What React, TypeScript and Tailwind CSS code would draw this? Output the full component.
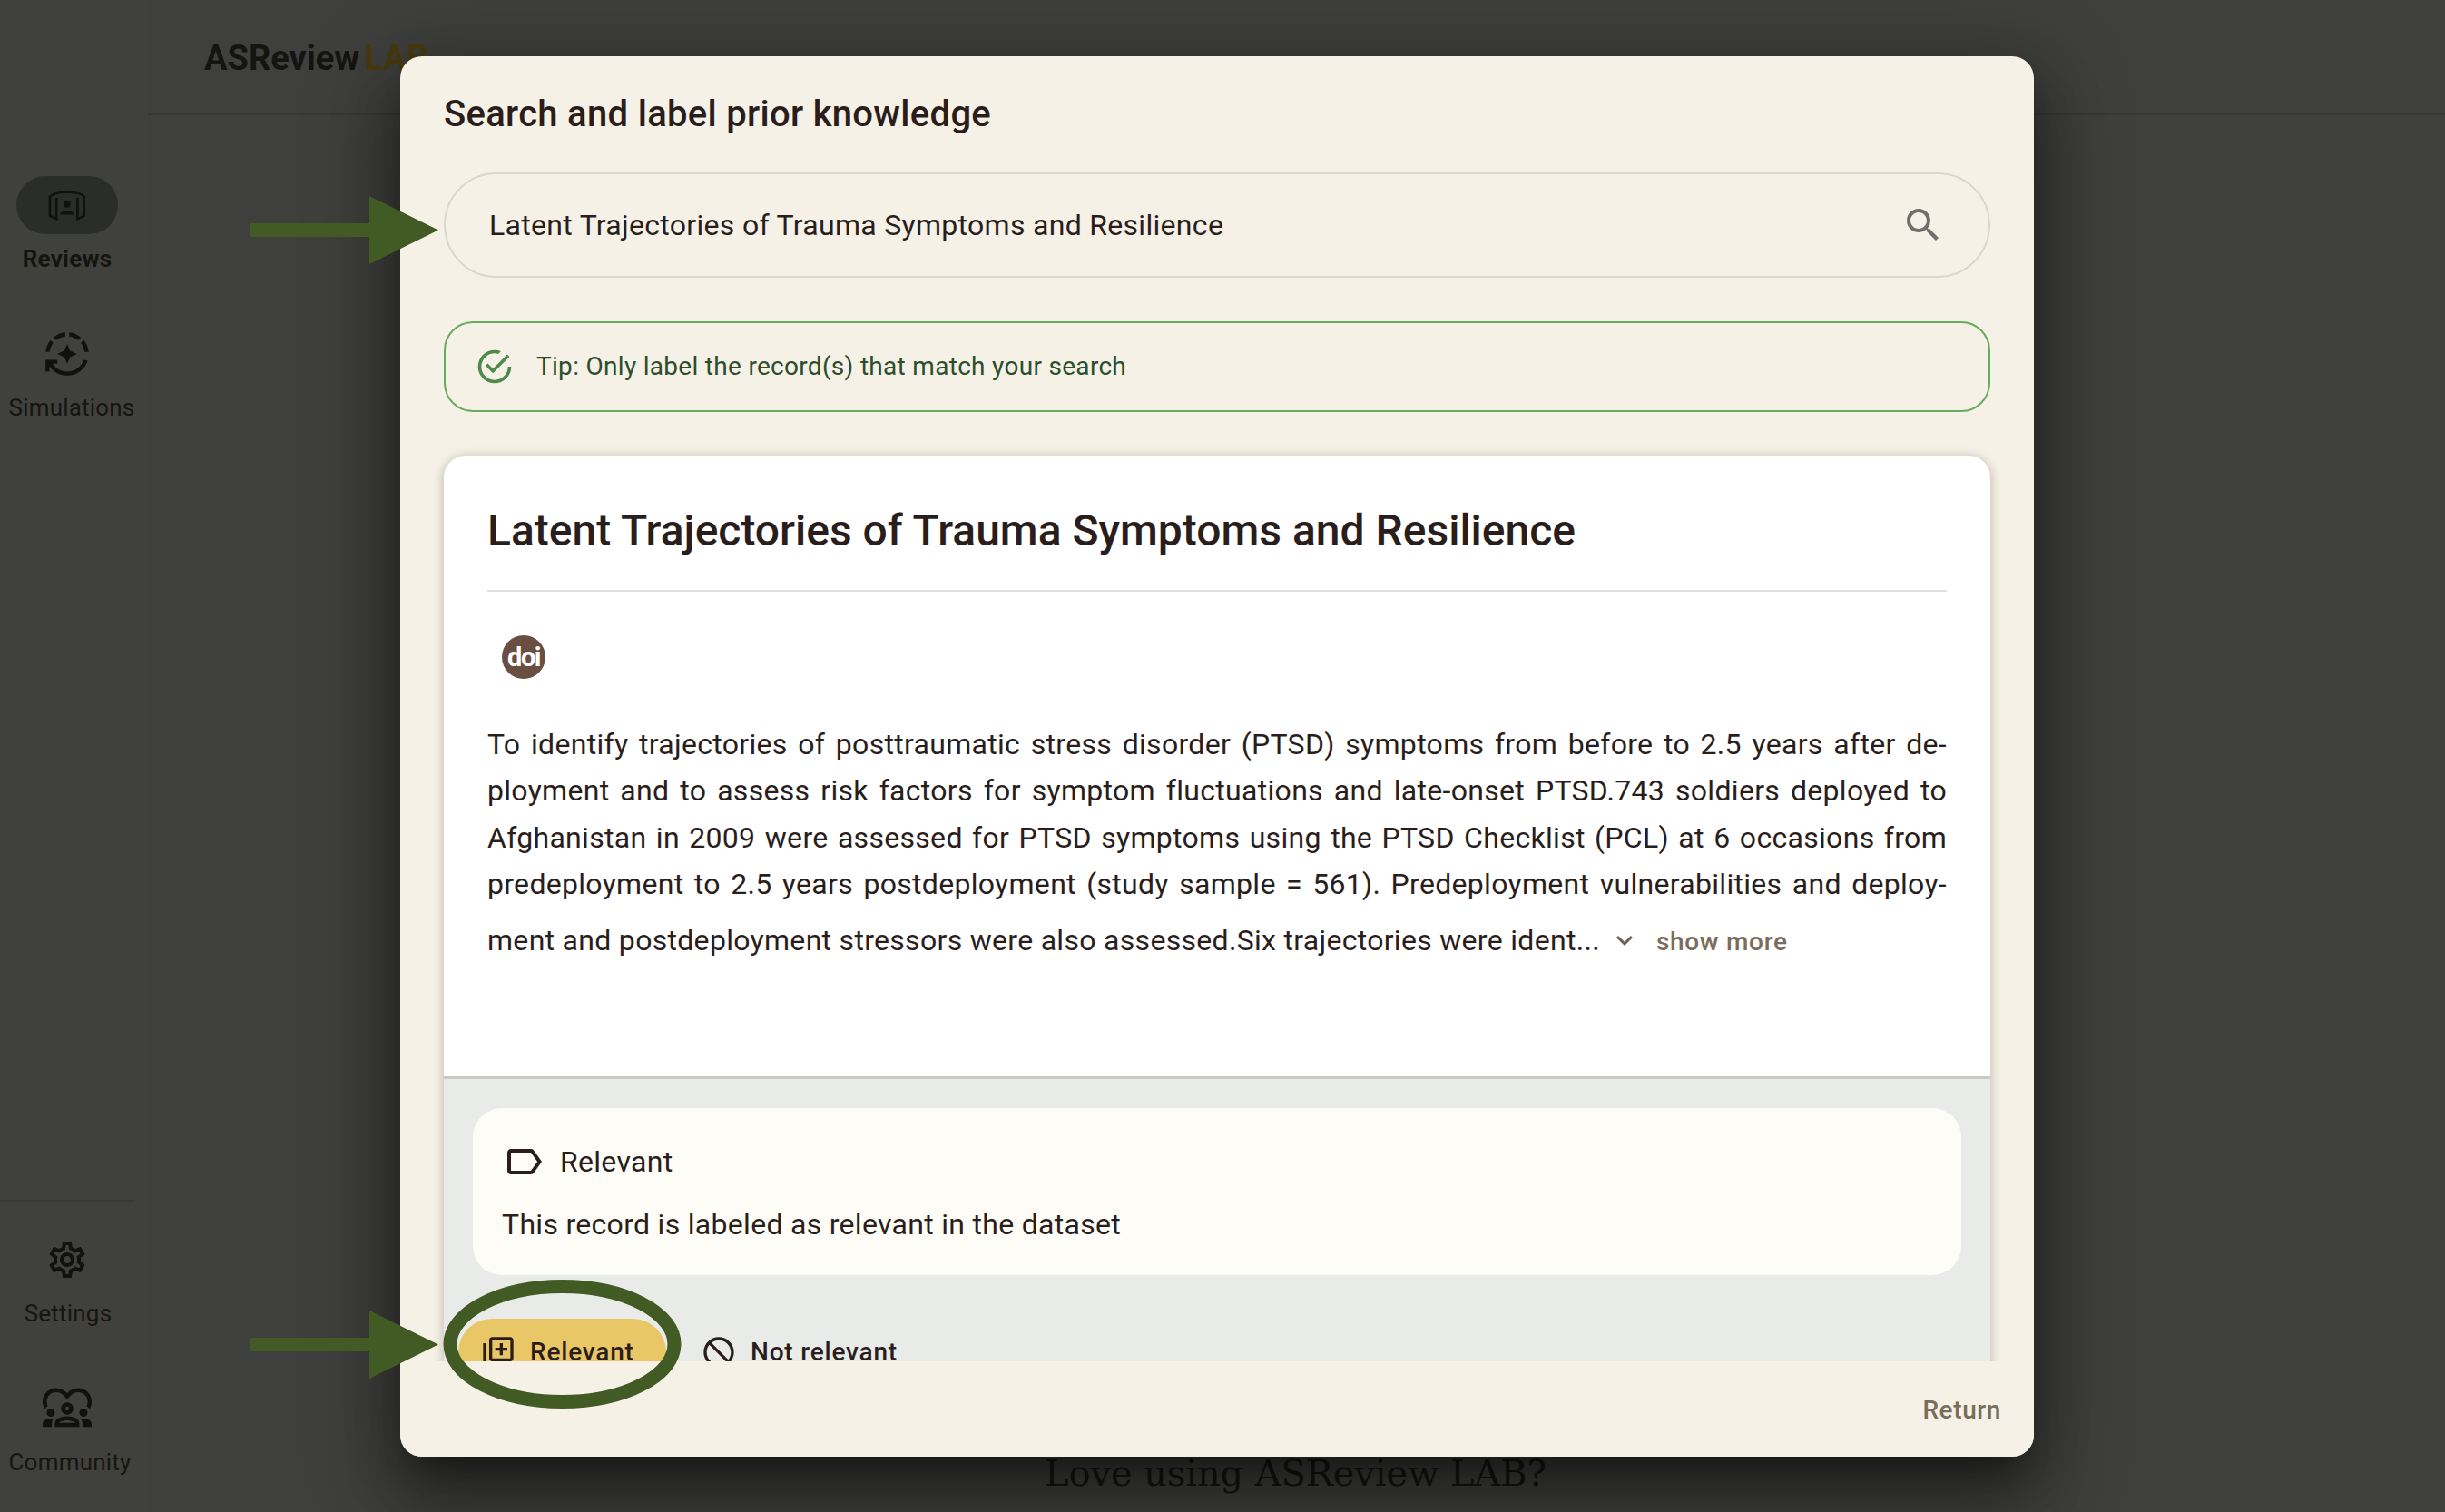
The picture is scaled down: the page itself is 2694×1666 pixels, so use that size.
import { MdAutoMode, MdExpandMore, MdOutlineDiversity1, MdOutlineLabel, MdOutlineLibraryAdd, MdOutlineSettings, MdSearch } from "react-icons/md";

const abstractLines = [
  "To identify trajectories of posttraumatic stress disorder (PTSD) symptoms from before to 2.5 years after de-",
  "ployment and to assess risk factors for symptom fluctuations and late-onset PTSD.743 soldiers deployed to",
  "Afghanistan in 2009 were assessed for PTSD symptoms using the PTSD Checklist (PCL) at 6 occasions from",
  "predeployment to 2.5 years postdeployment (study sample = 561). Predeployment vulnerabilities and deploy-",
];

function ReviewsIcon() {
  return (
    <svg viewBox="40 25 130 105" className="h-[35px] w-[43px]" fill="none" stroke="#11120f" strokeWidth="8">
      <path d="M44 50C60 27 148 27 162 50" />
      <path d="M46 46V112L68 122V52M160 46V112L138 122V52" />
      <circle cx="103" cy="72" r="12" fill="#11120f" stroke="none" />
      <path d="M80 108C80 90 126 90 126 108Z" fill="#11120f" stroke="none" />
    </svg>
  );
}

function NavItem({ label, icon, active, dx }: { label: string; icon: React.ReactNode; active?: boolean; dx: string }) {
  return (
    <div className="flex flex-col items-start">
      <div className={`ml-[18px] flex h-[64px] w-[112px] items-center justify-center rounded-[32px] ${active ? "bg-[#2b2d28]" : ""}`}>
        {icon}
      </div>
      <div className={`mt-[9px] w-[150px] text-center text-[26px] leading-[36px] tracking-[0.2px] ${dx} ${active ? "font-bold text-[#141510]" : "text-[#151612]"}`}>
        {label}
      </div>
    </div>
  );
}

function Arrow({ top }: { top: string }) {
  return (
    <svg viewBox="0 0 208 75" className={`absolute left-[275px] h-[75px] w-[208px] ${top}`}>
      <path d="M0 30H132V0L208 37.500L132 75V45H0Z" fill="#425a24" />
    </svg>
  );
}

export default function App() {
  return (
    <div className="relative flex h-[1666px] w-[2694px] overflow-hidden bg-[#3f3f3d] font-['Roboto',sans-serif]">
      {/* page behind the dialog */}
      <aside className="flex w-[163px] shrink-0 flex-col bg-[#40403c] pt-[194px]">
        <NavItem label="Reviews" active dx="-ml-[1px]" icon={<ReviewsIcon />} />
        <div className="mt-[55px]">
          <NavItem label="Simulations" dx="ml-[4px]" icon={<MdAutoMode size={52} color="#11120f" />} />
        </div>
        <div className="mt-auto mb-[2px] w-[146px] border-t-2 border-[#383835]" />
        <div className="pt-[30px]">
          <NavItem label="Settings" dx="ml-[0px]" icon={<MdOutlineSettings size={48} color="#11120f" />} />
        </div>
        <div className="mt-[55px] pb-[37px]">
          <NavItem label="Community" dx="ml-[2px]" icon={<MdOutlineDiversity1 size={54} color="#11120f" />} />
        </div>
      </aside>
      <main className="flex flex-1 flex-col">
        <header className="flex h-[127px] items-center border-b-2 border-[#383836] pt-[3px] pl-[62px] text-[38px] leading-none font-bold">
          <span className="text-[#141510]">ASReview</span>
          <span className="ml-[5px] text-[#4a3b0d]">LAB</span>
        </header>
        <div className="mt-auto pb-[18px] pl-[988px] font-['DejaVu_Serif',serif] text-[40px] leading-[50px] tracking-[-0.1px] text-[#161614]">
          Love using ASReview LAB?
        </div>
      </main>

      {/* dialog */}
      <section className="absolute top-[62px] left-[441px] flex h-[1543px] w-[1800px] flex-col rounded-[24px] bg-[#f5f1e7] tracking-[0.3px] text-[#2a1e1c] shadow-[0_22px_30px_-14px_rgba(0,0,0,0.35),0_48px_76px_6px_rgba(0,0,0,0.3),0_18px_92px_16px_rgba(0,0,0,0.25)]">
        <h2 className="px-[48px] pt-[47px] pb-[47px] text-[40px] leading-[34px] font-medium">Search and label prior knowledge</h2>
        <div className="flex flex-1 flex-col overflow-hidden px-[48px]">
          <div className="flex h-[116px] shrink-0 items-center justify-between rounded-full border-2 border-[#d9d7ce] pr-[48px] pl-[48px] text-[32px]">
            <span>Latent Trajectories of Trauma Symptoms and Resilience</span>
            <MdSearch size={48} color="#6f6e68" />
          </div>
          <div className="mt-[48px] flex h-[100px] shrink-0 items-center rounded-[32px] border-2 border-[#67ab5f] pl-[32px] text-[28px] text-[#2d4d2c]">
            <svg viewBox="0 0 24 24" className="h-[44px] w-[44px]" fill="#4f8a4b">
              <path d="M20,12A8,8 0 0,1 12,20A8,8 0 0,1 4,12A8,8 0 0,1 12,4C12.76,4 13.5,4.11 14.2,4.31L15.77,2.74C14.61,2.26 13.34,2 12,2A10,10 0 0,0 2,12A10,10 0 0,0 12,22A10,10 0 0,0 22,12M7.91,10.08L6.5,11.5L11,16L21,6L19.59,4.58L11,13.17L7.91,10.08Z" />
            </svg>
            <span className="ml-[24px]">Tip: Only label the record(s) that match your search</span>
          </div>
          <article className="mt-[48px] flex h-[1100px] shrink-0 flex-col rounded-t-[24px] bg-white shadow-[0_2px_8px_3px_rgba(80,70,40,0.22)]">
            <div className="h-[684px] shrink-0 px-[48px]">
              <h3 className="border-b-2 border-[#e0e0de] pt-[52px] pb-[34px] text-[48px] leading-[62px] font-medium tracking-normal">
                Latent Trajectories of Trauma Symptoms and Resilience
              </h3>
              <div className="mt-[48px] ml-[16px] flex h-[48px] w-[48px] items-center justify-center rounded-full bg-[#6b4e42] text-[29px] leading-none font-bold tracking-[-1.5px] text-white">
                doi
              </div>
              <div className="mt-[47px] text-[32px] leading-[51.400px]">
                {abstractLines.map((line) => (
                  <p key={line} className="[text-align-last:justify]">{line}</p>
                ))}
                <p className="mt-[9px] flex items-center">
                  <span>ment and postdeployment stressors were also assessed.Six trajectories were ident...</span>
                  <MdExpandMore size={36} color="#6f6250" className="ml-[9px]" />
                  <span className="mt-[2px] ml-[17px] text-[28px] font-medium tracking-[0.7px] text-[#7a6d5b]">show more</span>
                </p>
              </div>
            </div>
            <div className="flex-1 border-t-[3px] border-[#c9c9c6] bg-[#e9ebe8] px-[32px] pt-[32px]">
              <div className="h-[184px] rounded-[32px] bg-[#fdfcf6] px-[32px] pt-[35px]">
                <div className="flex items-center text-[32px] leading-[48px]">
                  <MdOutlineLabel size={48} />
                  <span className="ml-[16px]">Relevant</span>
                </div>
                <p className="mt-[21px] text-[32px] leading-[48px]">This record is labeled as relevant in the dataset</p>
              </div>
              <div className="mt-[48px] flex items-start text-[28px] font-medium tracking-[0.8px]">
                <div className="-ml-[16px] flex h-[74px] w-[229px] items-center rounded-[38px] bg-[#e9c766] pl-[24px]">
                  <MdOutlineLibraryAdd size={40} />
                  <span className="ml-[15px]">Relevant</span>
                </div>
                <div className="ml-[38px] flex h-[74px] items-center">
                  <svg viewBox="0 0 24 24" className="h-[40px] w-[40px]" fill="currentColor">
                    <path d="M12 2C6.47 2 2 6.47 2 12s4.47 10 10 10 10-4.47 10-10S17.53 2 12 2zm0 18c-4.41 0-8-3.59-8-8 0-1.85.63-3.55 1.69-4.9L16.9 18.31C15.55 19.37 13.85 20 12 20zm6.31-3.1L7.1 5.69C8.45 4.63 10.15 4 12 4c4.41 0 8 3.59 8 8 0 1.85-.63 3.55-1.69 4.9z" />
                  </svg>
                  <span className="ml-[15px]">Not relevant</span>
                </div>
              </div>
            </div>
          </article>
        </div>
        <div className="flex h-[105px] shrink-0 items-start justify-end rounded-b-[24px] bg-[#f5f1e7] pt-[36px] pr-[36px] text-[28px] leading-[36px] font-medium tracking-[0.6px] text-[#7a6d5b]">
          Return
        </div>
      </section>

      {/* annotations */}
      <Arrow top="top-[216px]" />
      <Arrow top="top-[1444px]" />
      <svg viewBox="0 0 263 142" className="absolute top-[1410px] left-[488px] h-[142px] w-[263px]" fill="none">
        <ellipse cx="131.500" cy="71" rx="123.500" ry="63.500" stroke="#425a24" strokeWidth="15" />
      </svg>
    </div>
  );
}
